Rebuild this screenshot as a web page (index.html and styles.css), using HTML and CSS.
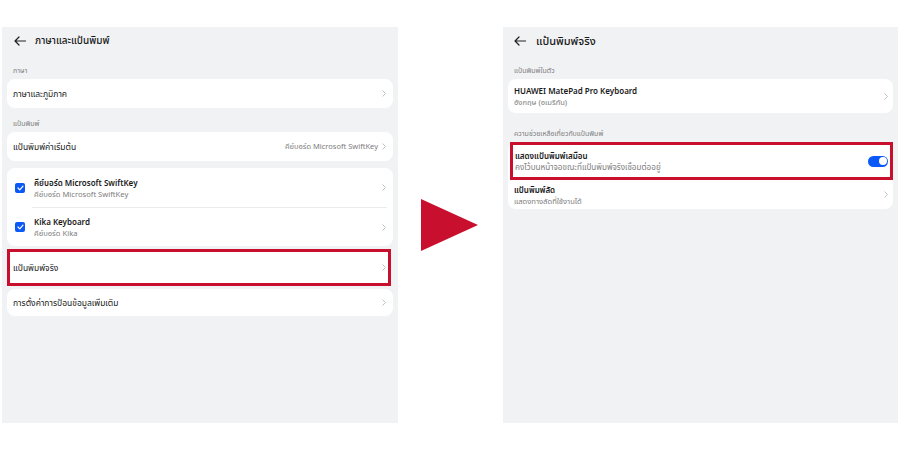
FILE: index.html
```html
<!DOCTYPE html>
<html>
<head>
    <title>แป้นพิมพ์จริง</title>
    <link rel="stylesheet" href="styles.css">
</head>
<body>
    <div class="stage">
        <!-- Left screen: language & keyboard -->
        <section class="panel">
            <header class="bar">
                <svg class="back" width="12" height="10" viewBox="0 0 12 10"><path d="M11.5 5H1M5 1L1 5l4 4" fill="none" stroke="#222" stroke-width="1.2" stroke-linecap="round" stroke-linejoin="round"/></svg>
                <h1 class="h1-small">ภาษาและแป้นพิมพ์</h1>
            </header>

            <div class="label">ภาษา</div>
            <div class="card">
                <div class="row">
                    <span class="title">ภาษาและภูมิภาค</span>
                    <svg class="chev" width="4" height="7" viewBox="0 0 4 7"><path d="M0.5 0.5L3.5 3.5L0.5 6.5" fill="none" stroke="#bbb" stroke-width="0.9"/></svg>
                </div>
            </div>

            <div class="label">แป้นพิมพ์</div>
            <div class="card">
                <div class="row">
                    <span class="title">แป้นพิมพ์ค่าเริ่มต้น</span>
                    <span class="value">คีย์บอร์ด Microsoft SwiftKey</span>
                    <svg class="chev" width="4" height="7" viewBox="0 0 4 7"><path d="M0.5 0.5L3.5 3.5L0.5 6.5" fill="none" stroke="#bbb" stroke-width="0.9"/></svg>
                </div>
            </div>

            <div class="card card-gap">
                <div class="row row-check">
                    <span class="check"><svg width="7" height="6" viewBox="0 0 7 6"><path d="M1 3l1.8 1.8L6 1.2" fill="none" stroke="#fff" stroke-width="1.2" stroke-linecap="round" stroke-linejoin="round"/></svg></span>
                    <div class="text">
                        <span class="title strong">คีย์บอร์ด Microsoft SwiftKey</span>
                        <span class="sub">คีย์บอร์ด Microsoft SwiftKey</span>
                    </div>
                    <svg class="chev" width="4" height="7" viewBox="0 0 4 7"><path d="M0.5 0.5L3.5 3.5L0.5 6.5" fill="none" stroke="#bbb" stroke-width="0.9"/></svg>
                </div>
                <div class="divider"></div>
                <div class="row row-check">
                    <span class="check"><svg width="7" height="6" viewBox="0 0 7 6"><path d="M1 3l1.8 1.8L6 1.2" fill="none" stroke="#fff" stroke-width="1.2" stroke-linecap="round" stroke-linejoin="round"/></svg></span>
                    <div class="text">
                        <span class="title strong">Kika Keyboard</span>
                        <span class="sub">คีย์บอร์ด Kika</span>
                    </div>
                    <svg class="chev" width="4" height="7" viewBox="0 0 4 7"><path d="M0.5 0.5L3.5 3.5L0.5 6.5" fill="none" stroke="#bbb" stroke-width="0.9"/></svg>
                </div>
            </div>

            <div class="highlight hl-left">
                <div class="row row-hl">
                    <span class="title">แป้นพิมพ์จริง</span>
                    <svg class="chev" width="4" height="7" viewBox="0 0 4 7"><path d="M0.5 0.5L3.5 3.5L0.5 6.5" fill="none" stroke="#bbb" stroke-width="0.9"/></svg>
                </div>
            </div>

            <div class="card card-last">
                <div class="row row-short">
                    <span class="title">การตั้งค่าการป้อนข้อมูลเพิ่มเติม</span>
                    <svg class="chev" width="4" height="7" viewBox="0 0 4 7"><path d="M0.5 0.5L3.5 3.5L0.5 6.5" fill="none" stroke="#bbb" stroke-width="0.9"/></svg>
                </div>
            </div>
        </section>

        <div class="arrow-wrap">
            <div class="arrow"></div>
        </div>

        <!-- Right screen: physical keyboard -->
        <section class="panel panel-right">
            <header class="bar">
                <svg class="back" width="12" height="10" viewBox="0 0 12 10"><path d="M11.5 5H1M5 1L1 5l4 4" fill="none" stroke="#222" stroke-width="1.2" stroke-linecap="round" stroke-linejoin="round"/></svg>
                <h1>แป้นพิมพ์จริง</h1>
            </header>

            <div class="label">แป้นพิมพ์ในตัว</div>
            <div class="card">
                <div class="row row-tall">
                    <div class="text">
                        <span class="title strong">HUAWEI MatePad Pro Keyboard</span>
                        <span class="sub">อังกฤษ (อเมริกัน)</span>
                    </div>
                    <svg class="chev" width="4" height="7" viewBox="0 0 4 7"><path d="M0.5 0.5L3.5 3.5L0.5 6.5" fill="none" stroke="#bbb" stroke-width="0.9"/></svg>
                </div>
            </div>

            <div class="label label-wide">ความช่วยเหลือเกี่ยวกับแป้นพิมพ์</div>
            <div class="card">
                <div class="highlight hl-right">
                    <div class="row row-toggle">
                        <div class="text">
                            <span class="title strong">แสดงแป้นพิมพ์เสมือน</span>
                            <span class="sub sub-wide">คงไว้บนหน้าจอขณะที่แป้นพิมพ์จริงเชื่อมต่ออยู่</span>
                        </div>
                        <span class="toggle"><span class="knob"></span></span>
                    </div>
                </div>
                <div class="row row-tall2">
                    <div class="text">
                        <span class="title strong">แป้นพิมพ์ลัด</span>
                        <span class="sub">แสดงทางลัดที่ใช้งานได้</span>
                    </div>
                    <svg class="chev" width="4" height="7" viewBox="0 0 4 7"><path d="M0.5 0.5L3.5 3.5L0.5 6.5" fill="none" stroke="#bbb" stroke-width="0.9"/></svg>
                </div>
            </div>
        </section>
    </div>
</body>
</html>
```

FILE: styles.css
```css
body {
    margin: 0;
    background-color: #ffffff;
    font-family: "Noto Sans", "Noto Sans Thai", "Liberation Sans", sans-serif;
    color: #191919;
}

.stage {
    display: flex;
    align-items: center;
    padding: 27px 0 0 2px;
}

.panel {
    width: 396px;
    height: 396px;
    box-sizing: border-box;
    padding: 0 5px;
    background-color: #f1f2f4;
}

.panel-right {
    width: 395px;
}

.bar {
    height: 28px;
    display: flex;
    align-items: center;
    gap: 9px;
    padding-left: 7px;
}

.panel-right .bar {
    padding-left: 6px;
    gap: 10px;
}

h1 {
    margin: 0;
    font-size: 11px;
    font-weight: 500;
}

.h1-small {
    font-size: 10px;
}

.label {
    padding: 8px 0 0 6px;
    line-height: 16px;
    font-size: 7px;
    color: #7d7d7d;
}

.label-wide {
    padding-top: 13px;
}

.card {
    background-color: #ffffff;
    border-radius: 8px;
}

.card-gap {
    margin-top: 7px;
}

.card-last {
    margin-top: 3px;
}

.row {
    display: flex;
    align-items: center;
    height: 29px;
    padding: 0 7px 0 6px;
}

.row-check {
    height: 39px;
    padding-left: 8px;
    gap: 9px;
}

.row-check + .divider + .row-check {
    height: 38px;
}

.row-tall {
    height: 34px;
    padding-right: 5px;
}

.row-tall2 {
    height: 29px;
    padding-right: 5px;
}

.row-short {
    height: 27px;
}

.row-hl {
    height: 31px;
    padding-left: 3px;
    padding-right: 2px;
}

.row-toggle {
    height: 32px;
    padding-left: 2px;
    padding-right: 2px;
}

.divider {
    height: 1px;
    margin: 0 6px 0 25px;
    background-color: #ebebeb;
}

.text {
    display: flex;
    flex-direction: column;
    gap: 1px;
    flex: 1;
}

.title {
    flex: 1;
    font-size: 8.5px;
    line-height: 11px;
}

.strong {
    font-size: 8px;
    font-weight: 600;
}

.sub {
    font-size: 7.6px;
    line-height: 10px;
    color: #7d7d7d;
}

.sub-wide {
    font-size: 8.1px;
}

.value {
    font-size: 7.5px;
    color: #7d7d7d;
    margin-right: 4px;
}

.chev {
    flex: none;
}

.check {
    flex: none;
    width: 10px;
    height: 10px;
    border-radius: 2px;
    background-color: #0a59f7;
    display: flex;
    align-items: center;
    justify-content: center;
}

.highlight {
    border: 3px solid #c8102e;
    background-color: #ffffff;
}

.hl-left {
    margin-top: 3px;
    margin-right: 2px;
}

.hl-right {
    margin-left: 2px;
}

.toggle {
    flex: none;
    width: 20px;
    height: 11px;
    border-radius: 6px;
    background-color: #0a59f7;
    display: flex;
    align-items: center;
    justify-content: flex-end;
    padding-right: 1.5px;
    box-sizing: border-box;
}

.knob {
    width: 8px;
    height: 8px;
    border-radius: 50%;
    background-color: #ffffff;
}

.arrow-wrap {
    width: 105px;
    display: flex;
    padding-left: 23px;
    box-sizing: border-box;
}

.arrow {
    width: 0;
    height: 0;
    border-left: 57px solid #c8102e;
    border-top: 26px solid transparent;
    border-bottom: 26px solid transparent;
}
```
